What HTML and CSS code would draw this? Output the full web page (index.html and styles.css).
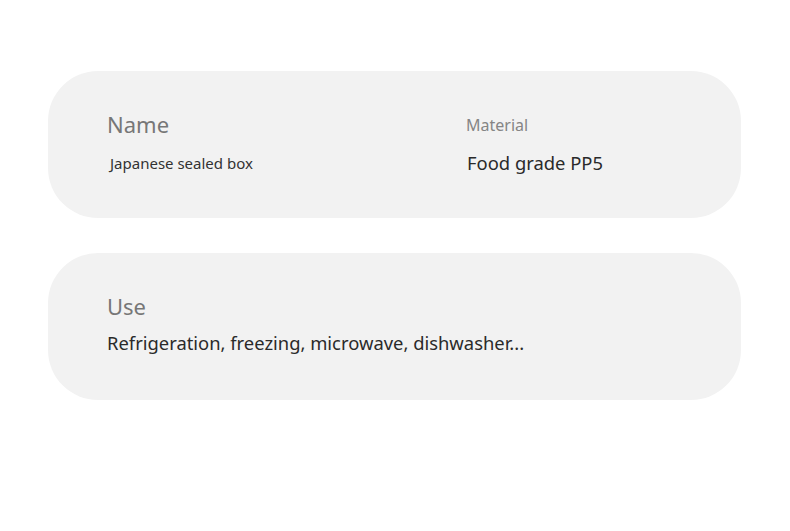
FILE: index.html
```html
<!DOCTYPE html>
<html>
<head>
<meta charset="utf-8">
<link rel="stylesheet" href="styles.css">
</head>
<body>
<div class="page">
  <section class="card card-grid">
    <div class="field">
      <div class="label label-lg">Name</div>
      <div class="value value-sm">Japanese sealed box</div>
    </div>
    <div class="field">
      <div class="label label-sm">Material</div>
      <div class="value value-md value-shift">Food grade PP5</div>
    </div>
  </section>
  <section class="card">
    <div class="field">
      <div class="label label-lg">Use</div>
      <div class="value value-md">Refrigeration, freezing, microwave, dishwasher...</div>
    </div>
  </section>
</div>
</body>
</html>
```
FILE: styles.css
```css
html, body {
  margin: 0;
  padding: 0;
  background: #ffffff;
}
body {
  font-family: "Noto Sans", "Open Sans", sans-serif;
}
.page {
  padding: 71px 49px 0 48px;
  display: flex;
  flex-direction: column;
  gap: 35px;
}
.card {
  background: #f2f2f2;
  border-radius: 50px;
  height: 147px;
  box-sizing: border-box;
  padding: 38px 0 0 59px;
}
.card-grid {
  display: grid;
  grid-template-columns: 359px 1fr;
}
.field {
  display: flex;
  flex-direction: column;
}
.label {
  color: #777777;
  line-height: 1;
}
.label-lg {
  font-size: 22px;
  margin-top: 4px;
}
.label-sm {
  font-size: 16px;
  color: #858585;
  margin-top: 8px;
}
.value {
  color: #2a2a2a;
  line-height: 1;
}
.value-sm {
  font-size: 15px;
  margin-top: 21px;
  margin-left: 3px;
  color: #333;
}
.value-md {
  font-size: 18.4px;
  margin-top: 17px;
}
.value-shift {
  margin-top: 21px;
  margin-left: 1px;
}
```
